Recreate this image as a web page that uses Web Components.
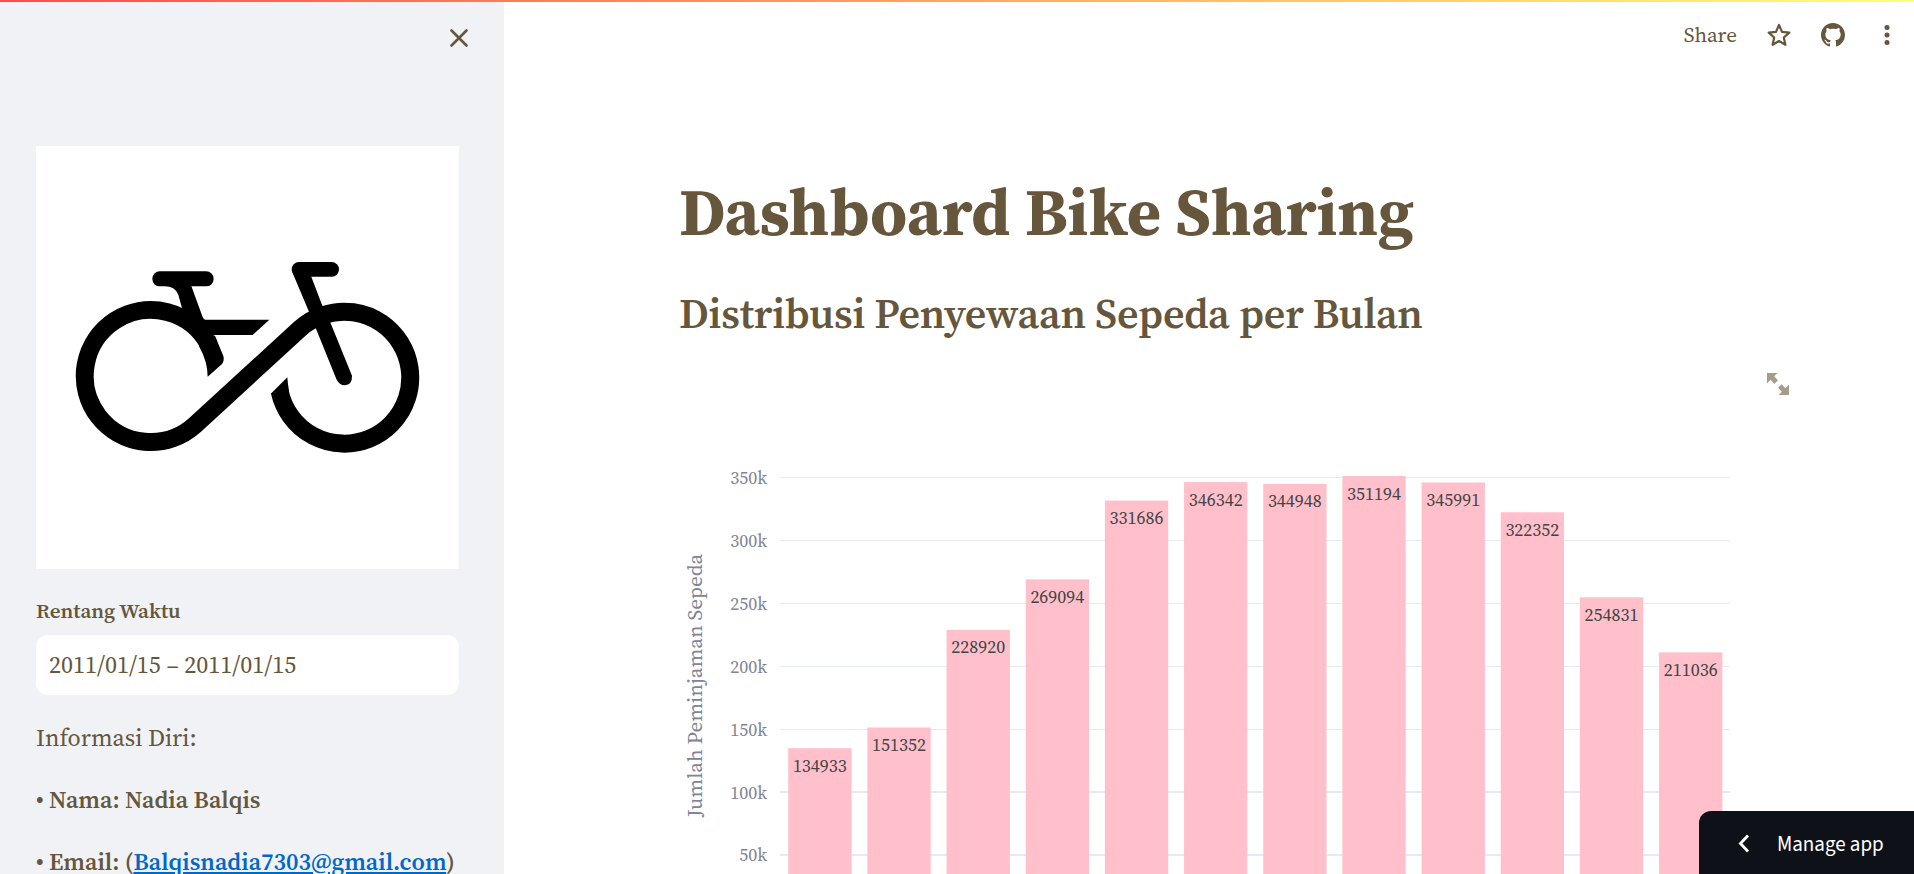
<!DOCTYPE html>
<html lang="id">
<head>
<meta charset="utf-8">
<title>Dashboard Bike Sharing</title>
<style>
html,body{margin:0;height:100%;overflow:hidden;background:#fff}
body{font-family:"Source Serif Pro","Source Serif 4","Liberation Serif",serif;color:#65563c}
</style>
</head>
<body>
<dashboard-app></dashboard-app>
<script>
const define=(name,html)=>customElements.define(name,class extends HTMLElement{
  connectedCallback(){
    if(this.shadowRoot)return;
    this.attachShadow({mode:'open'}).innerHTML=typeof html==='function'?html(this):html;
  }
});

define('bike-logo',`<style>:host{display:block;width:423px;height:423px;background:#fff}svg{display:block}</style>
<svg width="423" height="423" viewBox="18 -252 1269 1269">
<path d="M537 345A198 198 0 1 0 495 585L810 296A198 198 0 1 1 749 484" fill="none" stroke="#000" stroke-width="54"/>
<path d="M500 315L555 317L580 378Q584 392 576 402L533 440Q533 395 508 350Z"/>
<path d="M724 490L772 442Q773 460 777 482Z"/>
<rect x="367" y="124" width="184" height="45" rx="22.500"/>
<path d="M405 168Q436 170 445 194L456 235L490 315H668L718 269H525Q519 266 517 259L484 168Z"/>
<rect x="785" y="96" width="142" height="44.500" rx="22"/>
<path d="M787 127L836 243L858 296L919 447Q928 466 944 466Q967 464 966 437L902 280L877 227L843 138Z"/>
</svg>`);

define('date-field',`<style>:host{display:block}
.l{font-size:21px;line-height:32px;font-weight:600}
.i{margin-top:8px;height:60px;line-height:60px;border-radius:12px;background:#fff;padding-left:13px;font-size:24px}</style>
<div class="l">Rentang Waktu</div>
<div class="i">2011/01/15 – 2011/01/15</div>`);

define('profile-info',`<style>:host{display:flex;flex-direction:column;gap:24px;font-size:24px}
div{height:38px;line-height:38px;white-space:nowrap}b{font-weight:600}
a{color:#0068c9;text-decoration:underline}</style>
<div>Informasi Diri:</div>
<div><b>• Nama: Nadia Balqis</b></div>
<div><b>• Email: (<a href="mailto:Balqisnadia7303@gmail.com">Balqisnadia7303@gmail.com</a>)</b></div>`);

define('side-bar',`<style>:host{display:flex;flex-direction:column;width:504px;height:874px;box-sizing:border-box;padding:0 45px 0 36px;background:#f0f2f6;overflow:hidden;flex:none}
header{height:146px;flex:none;display:flex;justify-content:flex-end;align-items:flex-start}
header svg{margin:26px -12px 0 0}
date-field{margin-top:26px}profile-info{margin-top:24px}bike-logo{flex:none}</style>
<header><svg width="24" height="24" viewBox="0 0 24 24"><path d="M4.500 4.500L19.500 19.500M19.500 4.500L4.500 19.500" stroke="#65563c" stroke-width="2.600" stroke-linecap="round"/></svg></header>
<bike-logo></bike-logo><date-field></date-field><profile-info></profile-info>`);

define('tool-bar',`<style>:host{display:flex;align-items:center;justify-content:flex-end;height:70px;padding-right:18px}
.s{font-size:21px;line-height:30px}svg{display:block}</style>
<span class="s">Share</span>
<svg style="margin-left:29px" width="26" height="26" viewBox="0 0 26 26"><path d="M13 3L16 9.900L23.300 10.600L17.800 15.500L19.400 22.800L13 19L6.600 22.800L8.200 15.500L2.700 10.600L10 9.900Z" fill="none" stroke="#65563c" stroke-width="2.200" stroke-linejoin="round"/></svg>
<svg style="margin-left:29px" width="24" height="24" viewBox="0 0 16 16"><path fill="#65563c" d="M8 0C3.580 0 0 3.580 0 8c0 3.540 2.290 6.530 5.470 7.590.4.070.55-.17.55-.38 0-.19-.01-.82-.01-1.490-2.010.37-2.530-.49-2.690-.94-.09-.23-.48-.94-.82-1.130-.28-.15-.68-.52-.01-.53.63-.01 1.080.58 1.230.82.72 1.210 1.870.87 2.330.66.070-.52.28-.87.51-1.070-1.780-.2-3.640-.89-3.640-3.950 0-.87.31-1.590.82-2.150-.08-.2-.36-1.020.08-2.120 0 0 .67-.21 2.200.82.64-.18 1.320-.27 2-.27s1.360.09 2 .27c1.530-1.040 2.200-.82 2.200-.82.44 1.100.16 1.920.08 2.120.51.56.82 1.270.82 2.150 0 3.070-1.870 3.750-3.650 3.950.29.25.54.73.54 1.480 0 1.070-.01 1.930-.01 2.200 0 .21.15.46.55.38A8.010 8.010 0 0 0 16 8c0-4.420-3.580-8-8-8z"/></svg>
<svg style="margin-left:33px" width="18" height="24" viewBox="0 0 18 24"><g fill="#65563c"><circle cx="9" cy="4.500" r="2.500"/><circle cx="9" cy="12" r="2.500"/><circle cx="9" cy="19.500" r="2.500"/></g></svg>`);

define('bar-chart',()=>{
  const data=[134933,151352,228920,269094,331686,346342,344948,351194,345991,322352,254831,211036];
  const y=v=>483-v*62.93/50000,step=950/12;
  let s='';
  for(let v=50;v<=350;v+=50){
    const h=v<=100?2:1;
    s+=`<rect x="99" y="${Math.floor(y(v*1000))-(h-1)}" width="950" height="${h}" fill="#e6eaf1"/>`+
    `<text x="86" y="${y(v*1000)+6.4}" text-anchor="end" font-size="18" fill="#808495">${v}k</text>`;
  }
  data.forEach((v,i)=>{const x=99.3+step*(i+.1);
    s+=`<rect x="${x}" y="${y(v)}" width="${step*.8}" height="${483-y(v)}" fill="#ffc0cb"/><text x="${x+step*.4}" y="${y(v)+23.6}" text-anchor="middle" font-size="18" fill="#444">${v}</text>`});
  return `<style>:host{display:block;height:439px;overflow:hidden}svg{display:block}</style>
  <svg width="1110" height="439">${s}<text transform="translate(20.800 250.500) rotate(-90)" text-anchor="middle" font-size="21" fill="#808495">Jumlah Peminjaman Sepeda</text></svg>`;
});

define('chart-tools',`<style>:host{display:flex;justify-content:flex-end;height:62px}svg{display:block;margin:0}</style>
<svg width="22" height="22" viewBox="0 0 22 22" fill="#a59c8b"><path d="M0 0H10.500L7.200 3.300L11 7.200L7.500 10.800L3.500 6.800L0 10.500ZM22 22H11.500L14.800 18.700L11 14.800L14.600 11.200L18.500 15.200L22 11.500Z"/></svg>`);

define('manage-button',`<style>:host{position:absolute;right:0;bottom:0;width:215px;height:63px;box-sizing:border-box;display:flex;align-items:center;padding-left:38px;background:#0e1117;color:#fff;border-radius:12px 0 0 0;font:21px/30px "Source Sans Pro","Source Sans 3","Noto Sans CJK SC",sans-serif;white-space:nowrap}
svg{margin-right:26px;flex:none}span{padding-top:2px}</style>
<svg width="14" height="20" viewBox="0 0 14 20"><path d="M11 2.500L3.500 10.500L11 18.500" fill="none" stroke="#fff" stroke-width="2.800"/></svg><span>Manage app</span>`);

define('dashboard-app',`<style>:host{display:flex;position:relative;width:1914px;height:874px;overflow:hidden}
.bar{position:absolute;left:0;top:0;width:100%;height:2px;background:linear-gradient(90deg,#ff4b4b,#fffd80)}
main{flex:1;min-width:0}
article{padding:102px 125px 0 175px}
h1{margin:0;font-size:66px;line-height:80px;font-weight:700;white-space:nowrap}
h2{margin:36px 0 0;font-size:42px;line-height:50px;font-weight:600;letter-spacing:-.005em;white-space:nowrap}
chart-tools{margin-top:35px}bar-chart{margin-left:2px}</style>
<side-bar></side-bar>
<main><tool-bar></tool-bar><article><h1>Dashboard Bike Sharing</h1><h2>Distribusi Penyewaan Sepeda per Bulan</h2><chart-tools></chart-tools><bar-chart></bar-chart></article></main>
<manage-button></manage-button><div class="bar"></div>`);
</script>
</body>
</html>
